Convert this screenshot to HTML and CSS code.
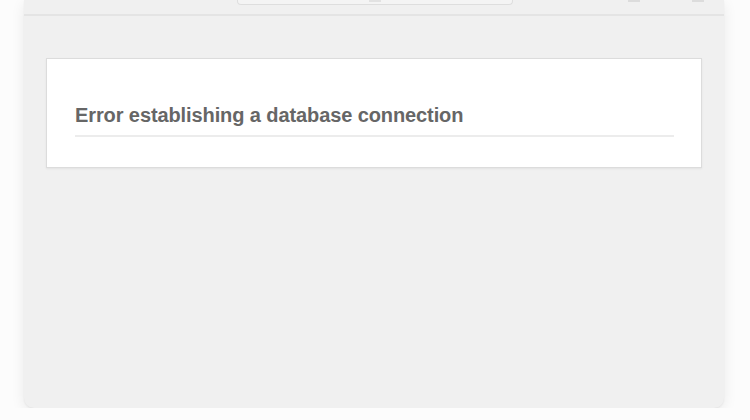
FILE: index.html
```html
<!DOCTYPE html>
<html lang="en">

<head>
    <meta charset="UTF-8">
    <meta name="viewport" content="width=device-width, initial-scale=1.0">
    <title>Database Error</title>
    <link rel="stylesheet" href="styles.css">
</head>

<body>
    <!-- browser window -->
    <div class="window">
        <!-- toolbar, mostly cropped off -->
        <div class="toolbar">
            <div class="address"><span class="tab"></span></div>
            <div class="tools">
                <span class="tool"></span>
                <span class="tool"></span>
            </div>
        </div>
        <!-- page content -->
        <div class="page">
            <div class="card">
                <h1 class="title">Error establishing a database connection</h1>
            </div>
        </div>
    </div>
</body>

</html>
```

FILE: styles.css
```css
* {
    box-sizing: border-box;
}

body {
    margin: 0;
    background: #fcfcfc;
    font-family: "Liberation Sans", Arial, sans-serif;
}

.window {
    width: 700px;
    height: 408px;
    margin-left: 24px;
    background: #f0f0f0;
    border-radius: 0 0 10px 10px;
    box-shadow: 0 4px 14px rgba(0, 0, 0, .08), 0 1px 2px rgba(0, 0, 0, .06);
    display: flex;
    flex-direction: column;
}

.toolbar {
    height: 16px;
    border-bottom: 2px solid #e4e4e4;
    display: flex;
    justify-content: space-between;
    align-items: flex-start;
}

.toolbar .address {
    width: 276px;
    height: 5px;
    margin-left: 213px;
    background: #f4f4f4;
    border: 1px solid #dedede;
    border-top: none;
    border-radius: 0 0 4px 4px;
    display: flex;
    justify-content: center;
}

.toolbar .tab {
    width: 12px;
    height: 2px;
    background: #e2e2e2;
}

.toolbar .tools {
    display: flex;
    gap: 52px;
    margin-right: 20px;
}

.toolbar .tool {
    width: 12px;
    height: 2px;
    background: #dcdcdc;
}

.page {
    flex: 1;
    padding: 42px 22px 0;
}

.card {
    background: #fff;
    border: 1px solid #dcdcdc;
    box-shadow: 0 1px 2px rgba(0, 0, 0, .06);
    padding: 44px 27px 30px 28px;
}

.title {
    margin: 0;
    padding-bottom: 8px;
    border-bottom: 2px solid #ececec;
    color: #666;
    font-size: 20px;
    line-height: 24px;
    font-weight: bold;
    letter-spacing: -0.1px;
}
```
